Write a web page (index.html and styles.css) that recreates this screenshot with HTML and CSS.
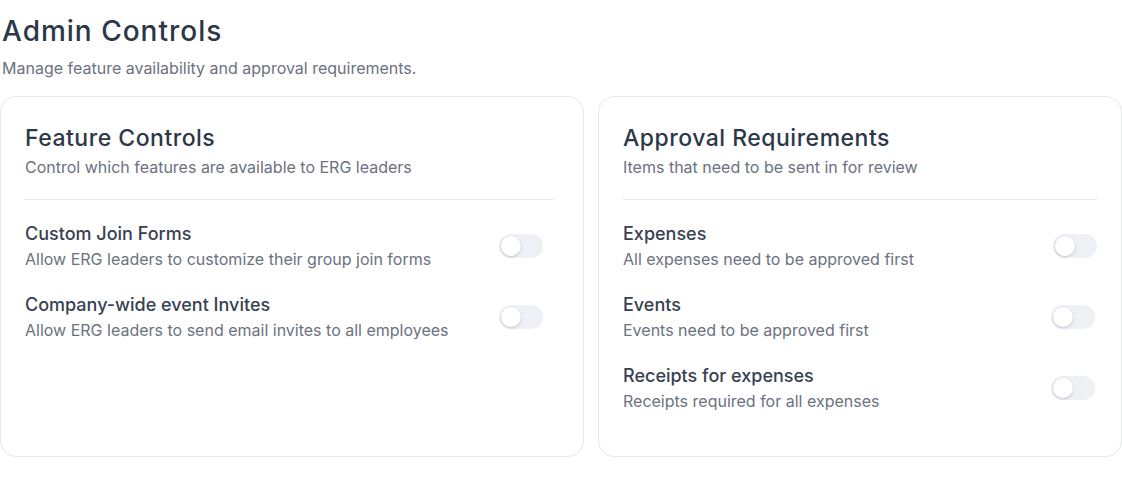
FILE: index.html
```html
<!DOCTYPE html>
<html lang="en">
<head>
  <meta charset="UTF-8" />
  <meta name="viewport" content="width=device-width, initial-scale=1.0"/>
  <title>Admin Controls</title>
  <link rel="stylesheet" href="styles.css">
</head>
<body>

  <!-- CABECERA -->
  <div class="cabecera">
    <h1>Admin Controls</h1>
    <p class="descripcion">Manage feature availability and approval requirements.</p>
  </div>

  <div class="tarjetas">
    <!-- FEATURE CONTROLS -->
    <div class="tarjeta tarjeta-features">
      <div class="tarjeta-cabecera">
        <h2>Feature Controls</h2>
        <p>Control which features are available to ERG leaders</p>
      </div>
      <div class="fila">
        <div class="fila-texto">
          <h3>Custom Join Forms</h3>
          <p>Allow ERG leaders to customize their group join forms</p>
        </div>
        <span class="interruptor"></span>
      </div>
      <div class="fila">
        <div class="fila-texto">
          <h3>Company-wide event Invites</h3>
          <p>Allow ERG leaders to send email invites to all employees</p>
        </div>
        <span class="interruptor"></span>
      </div>
    </div>

    <!-- APPROVAL REQUIREMENTS -->
    <div class="tarjeta">
      <div class="tarjeta-cabecera">
        <h2>Approval Requirements</h2>
        <p>Items that need to be sent in for review</p>
      </div>
      <div class="fila">
        <div class="fila-texto">
          <h3>Expenses</h3>
          <p>All expenses need to be approved first</p>
        </div>
        <span class="interruptor"></span>
      </div>
      <div class="fila">
        <div class="fila-texto">
          <h3>Events</h3>
          <p>Events need to be approved first</p>
        </div>
        <span class="interruptor interruptor-corto"></span>
      </div>
      <div class="fila">
        <div class="fila-texto">
          <h3>Receipts for expenses</h3>
          <p>Receipts required for all expenses</p>
        </div>
        <span class="interruptor interruptor-corto"></span>
      </div>
    </div>
  </div>

</body>
</html>
```

FILE: styles.css
```css
body {
  margin: 0;
  font-family: 'Inter', 'Liberation Sans', sans-serif;
  background-color: white;
  color: #374151;
}

h1, h2, h3, p {
  margin: 0;
}

.cabecera {
  padding: 14px 0 0 2px;
}

h1 {
  font-size: 28px;
  font-weight: 500;
  line-height: 34px;
  letter-spacing: 1px;
  color: #2d3748;
}

.descripcion {
  margin-top: 8px;
  font-size: 16px;
  line-height: 24px;
  color: #6b7280;
}

.tarjetas {
  display: grid;
  grid-template-columns: 584px 524px;
  gap: 14px;
  margin-top: 16px;
}

.tarjeta {
  border: 1px solid #e5e7eb;
  border-radius: 16px;
  padding: 24px;
  height: 361px;
  box-sizing: border-box;
}

.tarjeta-features {
  padding-right: 29px;
}

.tarjeta-cabecera {
  padding-bottom: 20px;
  border-bottom: 1px solid #e5e7eb;
  margin-bottom: 21px;
}

h2 {
  font-size: 23px;
  font-weight: 500;
  line-height: 34px;
  letter-spacing: 0.5px;
  color: #2d3748;
}

.tarjeta-cabecera p {
  font-size: 16px;
  line-height: 24px;
  color: #6b7280;
}

.fila {
  display: flex;
  align-items: center;
  justify-content: space-between;
  margin-bottom: 21px;
}

.fila h3 {
  font-size: 18px;
  font-weight: 500;
  line-height: 26px;
  color: #374151;
}

.fila p {
  font-size: 16px;
  line-height: 24px;
  color: #6b7280;
}

.interruptor {
  position: relative;
  width: 44px;
  height: 24px;
  border-radius: 12px;
  background-color: #eef0f5;
  flex-shrink: 0;
}

.tarjeta-features .interruptor {
  margin-right: 11px;
}

.interruptor-corto {
  margin-right: 2px;
}

.interruptor::after {
  content: '';
  position: absolute;
  top: 2px;
  left: 2px;
  width: 20px;
  height: 20px;
  border-radius: 50%;
  background-color: white;
  box-shadow: 0 1px 3px rgba(0, 0, 0, 0.2);
}
```
